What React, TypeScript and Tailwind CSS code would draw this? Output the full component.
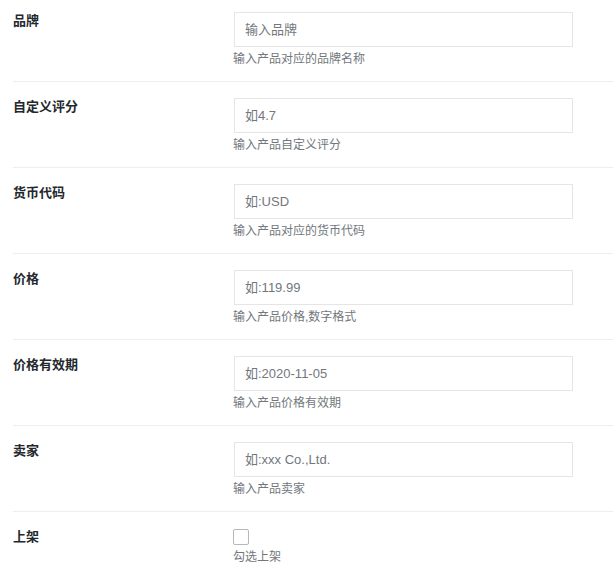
import React from 'react';

interface Field {
  label: string;
  placeholder?: string;
  help: string;
  checkbox?: boolean;
}

const fields: Field[] = [
  { label: '品牌', placeholder: '输入品牌', help: '输入产品对应的品牌名称' },
  { label: '自定义评分', placeholder: '如4.7', help: '输入产品自定义评分' },
  { label: '货币代码', placeholder: '如:USD', help: '输入产品对应的货币代码' },
  { label: '价格', placeholder: '如:119.99', help: '输入产品价格,数字格式' },
  { label: '价格有效期', placeholder: '如:2020-11-05', help: '输入产品价格有效期' },
  { label: '卖家', placeholder: '如:xxx Co.,Ltd.', help: '输入产品卖家' },
  { label: '上架', help: '勾选上架', checkbox: true },
];

export default function App() {
  return (
    <div
      className="w-[613px] h-[567px] overflow-hidden bg-white pl-[13px]"
      style={{ fontFamily: '"Liberation Sans", "Noto Sans CJK SC", sans-serif' }}
    >
      {fields.map((f, i) => (
        <div
          key={f.label}
          className={i === 0 ? 'flex h-[81px] pt-[12px]' : 'flex h-[86px] pt-[16px] border-t border-[#eeeeee]'}
        >
          {/* label column */}
          <div className="w-[221px] shrink-0 text-[13px] leading-[18px] font-bold text-[#23282d]">
            {f.label}
          </div>
          <div className="flex flex-col">
            {f.checkbox ? (
              <div className="ml-[-1px] mt-[1px] w-[16px] h-[16px] border border-[#b4b9be] rounded-[2px] bg-white" />
            ) : (
              <input
                readOnly
                placeholder={f.placeholder}
                className="w-[339px] h-[35px] border border-[#e5e5e5] px-[10px] text-[13px] text-[#444] placeholder:text-[#72777c] outline-none bg-white"
              />
            )}
            <div className="ml-[-1px] mt-[2px] text-[12px] leading-[20px] text-[#72777c]">{f.help}</div>
          </div>
        </div>
      ))}
    </div>
  );
}
